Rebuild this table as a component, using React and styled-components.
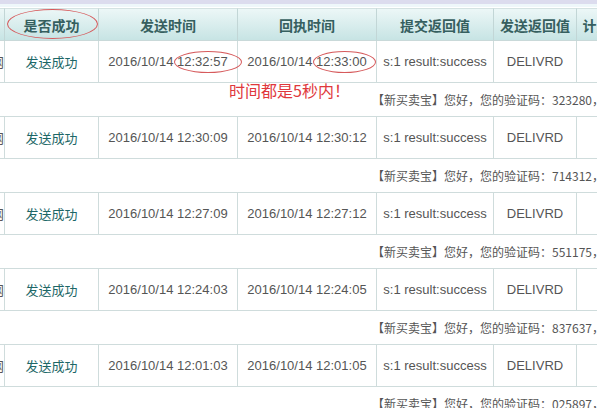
import React from "react";
import styled, { createGlobalStyle } from "styled-components";

const Global = createGlobalStyle`
  html, body { margin: 0; padding: 0; background: #fff; overflow: hidden; }
  body { font-family: "Liberation Sans", "Noto Sans CJK SC", sans-serif; }
`;

const Page = styled.div`
  position: relative;
  width: 597px;
  height: 408px;
  overflow: hidden;
  background: #fff;
`;

const TopStrip = styled.div`
  height: 8px;
  background: linear-gradient(to bottom, #dcdcee 0, #dcdcee 4px, #eef7fa 4px, #eef7fa 8px);
  border-bottom: 1px solid #ffffff;
  box-sizing: border-box;
`;

const Grid = styled.div`
  display: grid;
  grid-template-columns: 60px 94px 139px 139px 117px 83px 68px;
  margin-left: -55px;
  width: 700px;
`;

const HeadCell = styled.div`
  box-sizing: border-box;
  height: 33px;
  display: flex;
  align-items: center;
  justify-content: center;
  background: linear-gradient(to bottom, #ecf7f7, #c7e4e4);
  border-right: 1px solid #c2d6d6;
  border-bottom: 1px solid #c9d9d9;
  border-top: 1px solid #d4e2e2;
  font-family: "Noto Sans CJK SC", sans-serif;
  font-weight: bold;
  font-size: 14px;
  color: #365f5f;
  white-space: nowrap;
  overflow: hidden;
`;

const Cell = styled.div`
  box-sizing: border-box;
  height: 42px;
  display: flex;
  align-items: center;
  justify-content: ${(p) => (p.$right ? "flex-end" : "center")};
  border-right: 1px solid #cfdcdc;
  border-bottom: 1px solid #cfdcdc;
  font-size: 13px;
  color: ${(p) => (p.$status ? "#1d6767" : "#555")};
  font-family: ${(p) =>
    p.$status ? '"Noto Sans CJK SC", sans-serif' : '"Liberation Sans", "Noto Sans CJK SC", sans-serif'};
  white-space: nowrap;
  overflow: hidden;
  padding: ${(p) => (p.$right ? "0 0 0 0" : "0")};
`;

const MsgCell = styled.div`
  grid-column: 1 / -1;
  box-sizing: border-box;
  height: 34px;
  display: flex;
  align-items: center;
  padding-left: 427px;
  border-bottom: 1px solid #cfdcdc;
  font-family: "Noto Sans CJK SC", sans-serif;
  font-size: 12px;
  color: #555;
  white-space: nowrap;
  overflow: hidden;
`;

const Ellipse = styled.div`
  position: absolute;
  box-sizing: border-box;
  border: 1.5px solid #d65a5c;
  border-radius: 50%;
  left: ${(p) => p.$x}px;
  top: ${(p) => p.$y}px;
  width: ${(p) => p.$w}px;
  height: ${(p) => p.$h}px;
  pointer-events: none;
`;

const Note = styled.div`
  position: absolute;
  left: 229px;
  top: 78px;
  font-family: "Noto Sans CJK SC", sans-serif;
  font-size: 16px;
  line-height: 24px;
  color: #e0383c;
  white-space: nowrap;
`;

const headers = ["号码", "是否成功", "发送时间", "回执时间", "提交返回值", "发送返回值", "计费条数"];

const rows = [
  { send: "2016/10/14 12:32:57", back: "2016/10/14 12:33:00", code: "323280" },
  { send: "2016/10/14 12:30:09", back: "2016/10/14 12:30:12", code: "714312" },
  { send: "2016/10/14 12:27:09", back: "2016/10/14 12:27:12", code: "551175" },
  { send: "2016/10/14 12:24:03", back: "2016/10/14 12:24:05", code: "837637" },
  { send: "2016/10/14 12:01:03", back: "2016/10/14 12:01:05", code: "025897" },
];

export default function App() {
  return (
    <Page>
      <Global />
      <TopStrip />
      <Grid>
        {headers.map((h) => (
          <HeadCell key={h}>{h}</HeadCell>
        ))}
        {rows.map((r) => (
          <React.Fragment key={r.code}>
            <Cell $right>移动网</Cell>
            <Cell $status>发送成功</Cell>
            <Cell>{r.send}</Cell>
            <Cell>{r.back}</Cell>
            <Cell>s:1 result:success</Cell>
            <Cell>DELIVRD</Cell>
            <Cell></Cell>
            <MsgCell>【新买卖宝】您好，您的验证码：{r.code}，请勿泄露给他人。</MsgCell>
          </React.Fragment>
        ))}
      </Grid>
      <Ellipse $x={7} $y={9} $w={91} $h={30} />
      <Ellipse $x={174} $y={51} $w={68} $h={22} />
      <Ellipse $x={313} $y={51} $w={63} $h={22} />
      <Note>时间都是5秒内！</Note>
    </Page>
  );
}
